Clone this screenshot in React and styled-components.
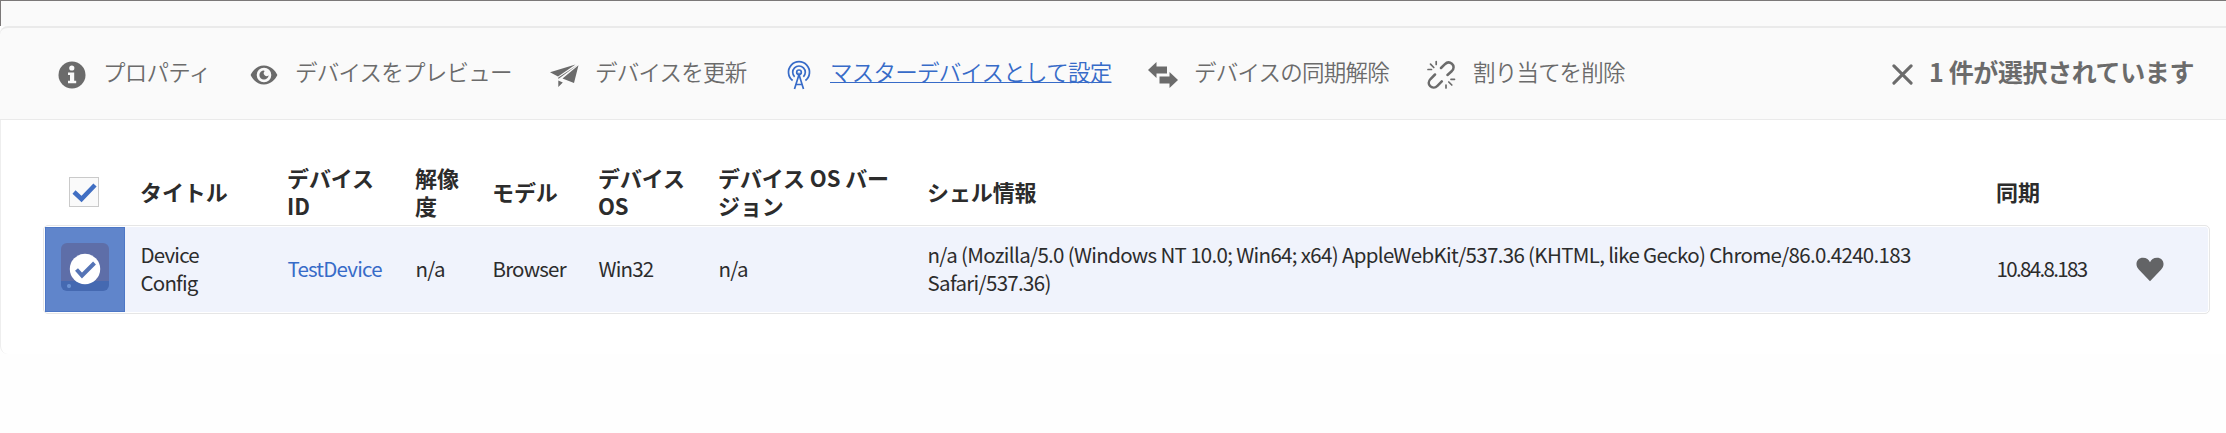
import React from 'react';
import styled, { createGlobalStyle } from 'styled-components';

const Global = createGlobalStyle`
  * { box-sizing: border-box; }
  body { margin: 0; background: #fefefe; font-family: "Noto Sans CJK JP", sans-serif; color: #2c2c2c; }
`;
const Page = styled.div`height: 433px; overflow: hidden;`;
const TopStrip = styled.div`
  height: 26px; background: #fafafa;
  border-top: 1px solid #7b7878; border-left: 1px solid #7b7878;
`;
const Panel = styled.main`
  height: 328px; background: #fff;
  border-left: 1px solid #eee; border-radius: 8px 0 0 8px;
`;
const Toolbar = styled.header`
  height: 94px; display: flex; align-items: center; background: #fafafa;
  border: solid #eaeaea; border-width: 2px 0 1px; border-radius: 8px 0 0 0;
  padding: 0 32px 0 57px; margin-left: -1px;
`;
const Action = styled.button`
  display: flex; align-items: center; flex: none; width: ${p => p.$w}px;
  border: 0; padding: 0; background: none; font: inherit; font-weight: 350;
  font-size: 22.5px; line-height: 30px; letter-spacing: -0.75px; white-space: nowrap;
  color: ${p => (p.$active ? '#376bc8' : '#6b6b6b')};
  svg { width: 30px; height: 30px; flex: none; margin-right: ${p => p.$gap}px; margin-top: 2px; }
  span { margin-top: -5px; text-decoration: ${p => (p.$active ? 'underline' : 'none')}; text-decoration-thickness: 1px; text-underline-offset: 1px; }
`;
const Selection = styled.div`
  margin-left: auto; display: flex; align-items: center;
  font-size: 25px; font-weight: 700; line-height: 32px; letter-spacing: -0.4px; color: #6b6b6b; white-space: nowrap;
  svg { width: 21px; height: 21px; margin-right: 16px; margin-top: 1px; }
  span { margin-top: -6px; }
`;
const Columns = styled.div`
  display: grid; align-items: center;
  grid-template-columns: 80px 147px 128px 77px 106px 120px 209px 1069px 139px 1fr;
`;
const Table = styled.section`padding: 43px 16px 0 42px;`;
const Head = styled(Columns)`
  height: 62px; padding-left: 1px; font-size: 22px; font-weight: 700; line-height: 28px; letter-spacing: -0.1px;
`;
const Row = styled(Columns)`
  height: 89px; border: 1px solid #e6e6e6; border-radius: 5px; background: #f0f3fc;
  box-shadow: inset 0 0 0 1px #fff; padding: 1px 1px 1px 0.5px;
`;
const Cell = styled.div`
  padding: 0 0 3px 16px; font-size: 20.5px; line-height: 28px; letter-spacing: ${p => p.$ls ?? -0.8}px;
  white-space: pre-line; color: ${p => (p.$link ? '#376bc8' : '#2c2c2c')};
`;
const HeadCell = styled.div`padding: 0 0 6px 16px; white-space: pre-line;`;
const Center = styled.div`display: flex; justify-content: center;`;
const Checkbox = styled.div`
  width: 30px; height: 30px; border: 1px solid #cacaca; background: #fafafa; margin-top: -4px;
  svg { width: 28px; height: 28px; display: block; }
`;
const Selected = styled.div`
  height: 85px; margin-left: 0.5px; background: #6085cb; border: 1px solid #4d77c6; display: flex; align-items: center; justify-content: center;
`;
const Thumb = styled.div`
  width: 48px; height: 48px; border-radius: 6px; margin-top: -6px; display: flex; align-items: center; justify-content: center;
  background: radial-gradient(circle at 8px 43px, #6b92d3 0 1.5px, transparent 2.5px), linear-gradient(#5e6ea8 0 38px, #4569b1 38px);
  svg { width: 32px; height: 32px; margin-top: 5px; }
`;

const Info = () => <svg viewBox="0 0 30 30"><circle cx="15" cy="15" r="13.5" fill="currentColor" /><circle cx="14.8" cy="8" r="2.6" fill="#fafafa" /><path d="M11 12.5h6.2v8.2h2v2.6H11v-2.6h2v-5.6h-2z" fill="#fafafa" /></svg>;
const Eye = () => <svg viewBox="0 0 30 30"><path fillRule="evenodd" fill="currentColor" d="M15 5.500C8 5.500 3.500 11 1.600 15c2 4 6.400 9.500 13.400 9.500S26.500 19 28.400 15C26.500 11 22 5.500 15 5.500zM15 7.700a7.300 7.300 0 1 1 0 14.600a7.300 7.300 0 0 1 0-14.600z" /><path fill="currentColor" d="M15 10.400a4.600 4.600 0 1 0 4.600 4.800a2.600 2.600 0 0 1-4-3.900z" /></svg>;
const Plane = () => <svg viewBox="0 0 30 30" fill="currentColor"><path d="M26.500 4.500L1 12.300L9 16.500zM29.500 5.300L25 23L13.500 18.500zM28.500 5L9.300 17.500V19zM9.300 20.500L13.800 22.500L9.300 27z" /></svg>;
const Antenna = () => <svg viewBox="0 0 30 30" fill="none" stroke="currentColor" strokeWidth="1.700"><path d="M8.600 20.500a10.500 10.500 0 1 1 12.800 0M10.600 16.800a6.300 6.300 0 1 1 8.800 0M10.500 29L15 14.500l4.500 14.500M12.200 24.500h5.600" /><circle cx="15" cy="12.300" r="2.300" /></svg>;
const Swap = () => <svg viewBox="0 0 30 30" fill="currentColor"><path d="M0 10L8.500 2v4.500H19v7H8.500V18zM30 20l-8.500 8v-4.500H11.500v-7h10V12z" /></svg>;
const Unlink = () => <svg viewBox="0 0 30 30" fill="none" stroke="currentColor" strokeLinecap="round"><path strokeWidth="2.500" d="M15 8l3.700-3.700c2.300-2.300 5.200-2.200 7.200-.5 2.300 2 2.200 4.900 0 7.200L21.500 15M9 14.500L4.500 19c-2.200 2.300-2.300 5.200-.3 7.200 2 1.900 5 1.800 7.200-.4l4.400-4.500" /><path strokeWidth="1.700" d="M10.200 1.500v3M4.500 4.200l3.300 3.300M2 9.500H5.500M20 25v3M22.800 22l3 3M25 19.300H28.500" /></svg>;
const Close = () => <svg viewBox="0 0 22 22" stroke="currentColor" strokeWidth="3.200" strokeLinecap="round"><path d="M2 2l18 18M20 2L2 20" /></svg>;
const Check = () => <svg viewBox="0 0 28 28" fill="none" stroke="#416fc3" strokeWidth="4.500"><path d="M4 14l7.500 7L25 7" /></svg>;
const CheckCircle = () => <svg viewBox="0 0 32 32"><circle cx="16" cy="16" r="15.200" fill="#fff" /><path d="M7.500 16.500l5.500 6L25.500 10" fill="none" stroke="#5574b6" strokeWidth="4" /></svg>;
const HeartIcon = styled.svg`width: 28px; height: 25px; margin-left: 16px;`;
const Heart = () => <HeartIcon viewBox="1 1 28 24.500"><path fill="#636466" d="M15 25L4 13.500C-1 8 2 1.500 8 1.500c3.500 0 6 2 7 4.500 1-2.500 3.500-4.500 7-4.500 6 0 9 6.500 4 12z" /></HeartIcon>;

const actions = [
  ['プロパティ', Info, 192, 16], ['デバイスをプレビュー', Eye, 300, 16], ['デバイスを更新', Plane, 235, 16],
  ['マスターデバイスとして設定', Antenna, 364, 16, true], ['デバイスの同期解除', Swap, 278, 16], ['割り当てを削除', Unlink, 210, 17],
];
const heads = ['タイトル', 'デバイス\nID', '解像\n度', 'モデル', 'デバイス\nOS', 'デバイス OS バー\nジョン', 'シェル情報', '同期'];

export default function App() {
  return (
    <Page>
      <Global />
      <TopStrip />
      <Panel>
        <Toolbar>
          {actions.map(([label, Icon, w, gap, active]) => (
            <Action key={label} $w={w} $gap={gap} $active={active}><Icon /><span>{label}</span></Action>
          ))}
          <Selection><Close /><span>1 件が選択されています</span></Selection>
        </Toolbar>
        <Table>
          <Head>
            <Center><Checkbox><Check /></Checkbox></Center>
            {heads.map(h => <HeadCell key={h}>{h}</HeadCell>)}
          </Head>
          <Row>
            <Selected><Thumb><CheckCircle /></Thumb></Selected>
            <Cell>{'Device\nConfig'}</Cell>
            <Cell $link>TestDevice</Cell>
            <Cell>n/a</Cell>
            <Cell>Browser</Cell>
            <Cell>Win32</Cell>
            <Cell>n/a</Cell>
            <Cell $ls={-0.67}>{'n/a (Mozilla/5.0 (Windows NT 10.0; Win64; x64) AppleWebKit/537.36 (KHTML, like Gecko) Chrome/86.0.4240.183\nSafari/537.36)'}</Cell>
            <Cell $ls={-1.65}>10.84.8.183</Cell>
            <Heart />
          </Row>
        </Table>
      </Panel>
    </Page>
  );
}
